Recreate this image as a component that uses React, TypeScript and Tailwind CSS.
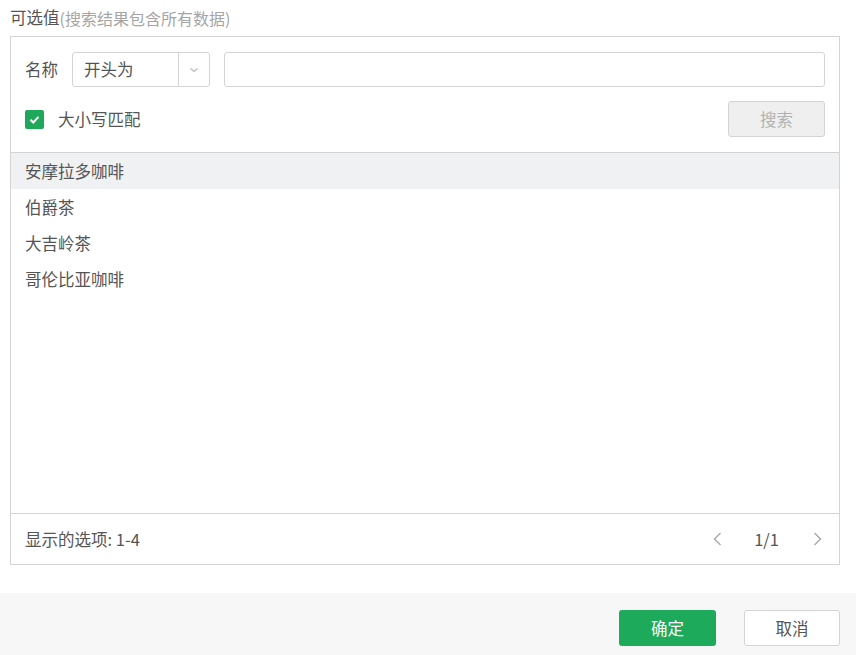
import React from "react";

const items = ["安摩拉多咖啡", "伯爵茶", "大吉岭茶", "哥伦比亚咖啡"];

function ChevronDown() {
  return (
    <svg width="12" height="12" viewBox="0 0 12 12" fill="none">
      <path d="M2.5 4.5 6 7.5 9.5 4.5" stroke="#b5b5b5" strokeWidth="1.1" />
    </svg>
  );
}

function Chevron({ dir }: { dir: "left" | "right" }) {
  return (
    <svg width="9" height="16" viewBox="0 0 9 16" fill="none">
      <path
        d={dir === "left" ? "M7.5 2 1.5 8 7.5 14" : "M1.5 2 7.5 8 1.5 14"}
        stroke="#a8a8a8"
        strokeWidth="1.4"
      />
    </svg>
  );
}

export default function App() {
  return (
    <div
      className="w-[856px] h-[655px] bg-white text-[16.5px] text-[#555] flex flex-col"
      style={{ fontFamily: '"Noto Sans CJK SC", "Noto Sans", sans-serif' }}
    >
      <div className="h-[36px] px-[10px] flex items-center pb-[1px] leading-none">
        <span className="text-[16.5px]">可选值</span>
        <span className="text-[16px] text-[#a5a5a5]">(搜索结果包含所有数据)</span>
      </div>

      <div className="ml-[10px] w-[830px] h-[529px] border border-[#d4d4d4] flex flex-col">
        <div className="px-[14px] pt-[15px]">
          <div className="flex items-center h-[35px]">
            <span className="w-[47px]">名称</span>
            <div className="w-[138px] h-[35px] border border-[#d4d4d4] rounded-[3px] flex">
              <div className="flex-1 flex items-center px-[11px]">开头为</div>
              <div className="w-[31px] border-l border-[#d4d4d4] flex items-center justify-center">
                <ChevronDown />
              </div>
            </div>
            <div className="ml-[14px] flex-1 h-[35px] border border-[#d4d4d4] rounded-[3px]" />
          </div>
          <div className="flex items-center justify-between mt-[14px] h-[36px]">
            <div className="flex items-center">
              <span className="w-[19px] h-[19px] rounded-[2px] bg-[#1fa85a] flex items-center justify-center">
                <svg width="13" height="13" viewBox="0 0 13 13" fill="none">
                  <path d="M2.5 6.8 5.3 9.5 10.5 3.8" stroke="#fff" strokeWidth="2" />
                </svg>
              </span>
              <span className="ml-[14px]">大小写匹配</span>
            </div>
            <button className="w-[97px] h-[36px] border border-[#d4d4d4] rounded-[3px] bg-[#efefef] text-[#b3b3b3]">
              搜索
            </button>
          </div>
        </div>

        <div className="mt-[15px] border-t border-[#d4d4d4] flex-1 flex flex-col">
          {items.map((it, i) => (
            <div
              key={it}
              className={
                "h-[36px] flex items-center px-[14px] " +
                (i === 0 ? "bg-[#f0f1f3]" : "")
              }
            >
              {it}
            </div>
          ))}
        </div>

        <div className="h-[51px] border-t border-[#d4d4d4] flex items-center justify-between px-[14px]">
          <span>显示的选项: 1-4</span>
          <div className="flex items-center pr-[3px]">
            <Chevron dir="left" />
            <span className="ml-[32px] mr-[34px]">1/1</span>
            <Chevron dir="right" />
          </div>
        </div>
      </div>

      <div className="mt-[28px] flex-1 bg-[#f7f7f7] flex items-start justify-end pt-[17px] pr-[16px] gap-[28px]">
        <button className="w-[97px] h-[36px] rounded-[3px] bg-[#1eaa5b] text-white">确定</button>
        <button className="w-[96px] h-[36px] rounded-[3px] border border-[#d4d4d4] bg-white">
          取消
        </button>
      </div>
    </div>
  );
}
